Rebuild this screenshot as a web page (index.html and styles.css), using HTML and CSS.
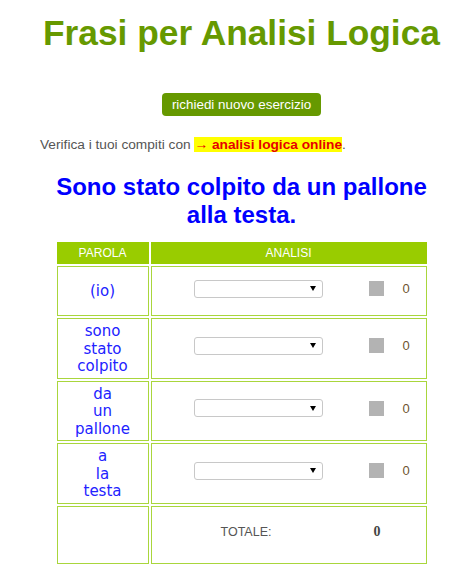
FILE: index.html
```html
<!DOCTYPE html>
<html lang="it">
<head>
<meta charset="utf-8">
<title>Frasi per Analisi Logica</title>
<link rel="stylesheet" href="styles.css">
</head>
<body>
<div class="page">
  <h1 class="title">Frasi per Analisi Logica</h1>
  <div class="btn-row"><button class="btn" type="button">richiedi nuovo esercizio</button></div>
  <p class="verify">Verifica i tuoi compiti con <a class="hl" href="#">→ analisi logica online</a>.</p>
  <h2 class="sentence">Sono stato colpito da un pallone alla testa.</h2>
  <table class="grid">
    <thead>
      <tr><th class="c1">PAROLA</th><th class="c2">ANALISI</th></tr>
    </thead>
    <tbody>
      <tr class="r-single">
        <td class="word">(io)</td>
        <td class="ana"><div class="line"><select class="sel"><option></option></select><span class="sq"></span><span class="pt">0</span></div></td>
      </tr>
      <tr>
        <td class="word">sono<br>stato<br>colpito</td>
        <td class="ana"><div class="line"><select class="sel"><option></option></select><span class="sq"></span><span class="pt">0</span></div></td>
      </tr>
      <tr>
        <td class="word">da<br>un<br>pallone</td>
        <td class="ana"><div class="line"><select class="sel"><option></option></select><span class="sq"></span><span class="pt">0</span></div></td>
      </tr>
      <tr>
        <td class="word">a<br>la<br>testa</td>
        <td class="ana"><div class="line"><select class="sel"><option></option></select><span class="sq"></span><span class="pt">0</span></div></td>
      </tr>
      <tr class="r-total">
        <td class="word"></td>
        <td class="ana"><div class="tot"><span class="tot-l">TOTALE:</span><span class="tot-v">0</span></div></td>
      </tr>
    </tbody>
  </table>
</div>
</body>
</html>
```
FILE: styles.css
```css
html, body {
  margin: 0;
  padding: 0;
  background: #fff;
}
.page {
  padding-left: 20px;
  font-family: "Liberation Sans", Arial, sans-serif;
  text-align: center;
}
.title {
  margin: 13px 0 0;
  font-size: 35.3px;
  line-height: 40px;
  font-weight: bold;
  color: #669900;
}
.btn-row {
  margin-top: 40px;
}
.btn {
  height: 23px;
  width: 159px;
  padding: 0;
  border: 0;
  border-radius: 4px;
  background: #669900;
  color: #fff;
  font-family: "Liberation Sans", Arial, sans-serif;
  font-size: 13.4px;
}
.verify {
  margin: 21px 0 0;
  padding-left: 20px;
  text-align: left;
  font-size: 13.7px;
  line-height: 16px;
  color: #555;
}
.hl {
  background: #ffff00;
  color: #e60000;
  font-weight: bold;
  text-decoration: none;
}
.sentence {
  width: 374px;
  margin: 20px auto 0;
  font-size: 24px;
  line-height: 27.5px;
  font-weight: bold;
  color: #0000ff;
}
.grid {
  margin: 12px auto 0;
  border-collapse: separate;
  border-spacing: 2px;
}
.grid th {
  height: 22px;
  padding: 0;
  background: #99cc00;
  color: #fff;
  font-weight: normal;
  font-size: 12px;
}
.c1 { width: 92px; }
.c2 { width: 276px; }
.grid td {
  border: 1px solid #a9d63c;
  padding: 3px 0;
  vertical-align: middle;
}
.grid td.word {
  padding: 4px 0 2px;
}
.word {
  font-family: "DejaVu Sans", Verdana, sans-serif;
  font-size: 15px;
  line-height: 17.5px;
  color: #2222ff;
}
.r-single td {
  height: 42px;
}
.r-total td {
  height: 50px;
}
.line {
  display: flex;
  align-items: center;
  padding-left: 42px;
  margin-top: -5px;
}
.sel {
  -webkit-appearance: none;
  appearance: none;
  width: 129px;
  height: 18px;
  margin: 0;
  border: 1px solid #c8c8c8;
  border-radius: 3px;
  background: #fff url("data:image/svg+xml,%3Csvg xmlns='http://www.w3.org/2000/svg' width='6' height='5'%3E%3Cpath d='M0 0h6L3 5z' fill='%23000'/%3E%3C/svg%3E") no-repeat right 6px center;
}
.sq {
  width: 15px;
  height: 15px;
  margin-left: 46px;
  background: #b3b3b3;
}
.pt {
  margin-left: 19px;
  font-family: "Liberation Sans", Arial, sans-serif;
  font-size: 13px;
  color: #6e5530;
}
.tot {
  display: flex;
  align-items: center;
  padding-left: 69px;
  margin-top: -5px;
}
.tot-l {
  font-size: 12.5px;
  color: #555;
}
.tot-v {
  margin-left: 102px;
  font-family: "Liberation Serif", "Times New Roman", serif;
  font-weight: bold;
  font-size: 14px;
  color: #444;
}
```
